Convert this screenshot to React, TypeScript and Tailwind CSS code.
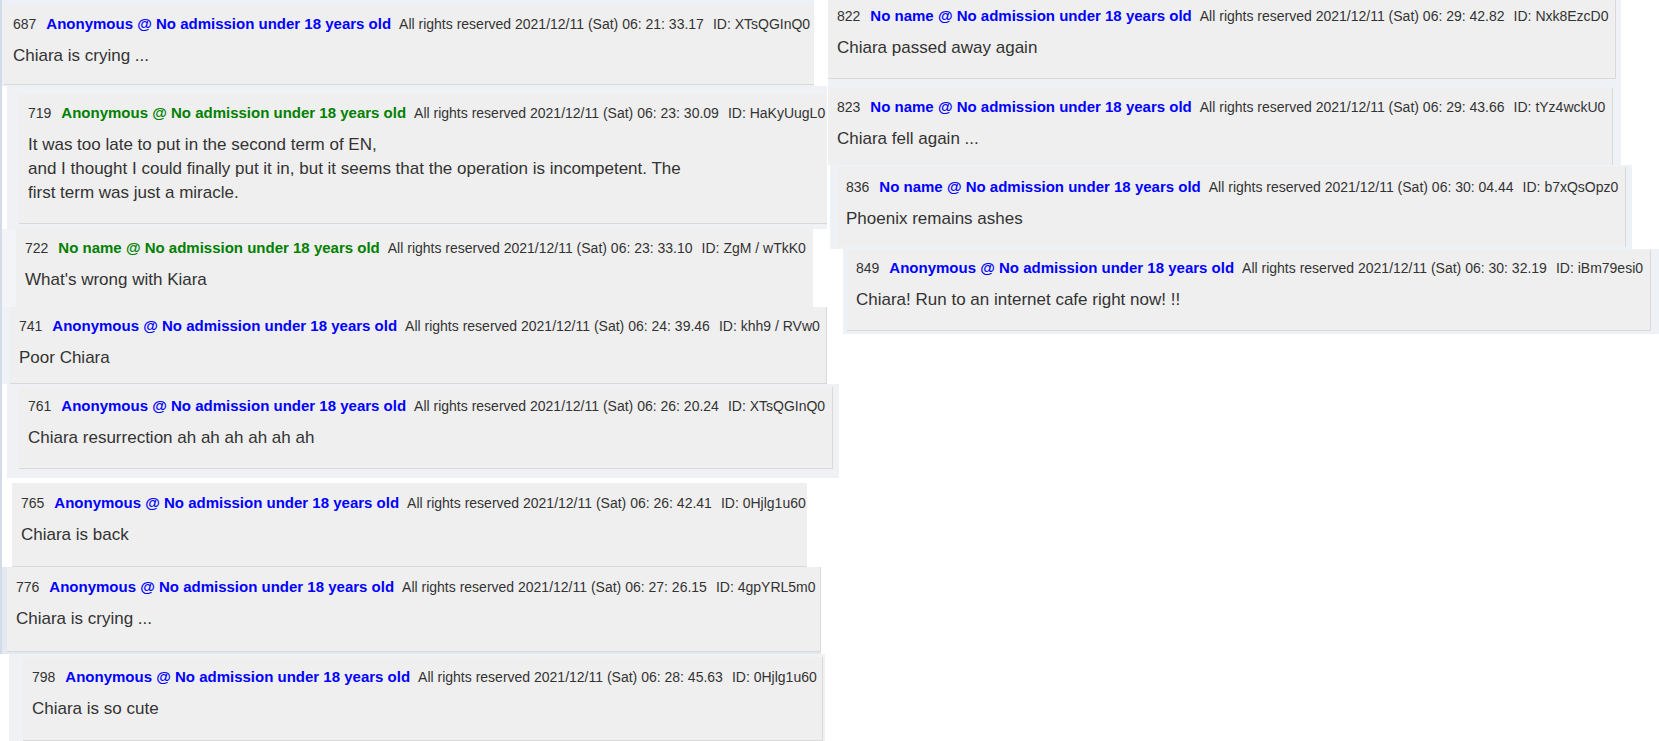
import React from 'react';

type Post = {
  no: number;
  name: string;
  green?: boolean;
  time: string;
  id: string;
  body: string[];
};

function PostCard({ post, className }: { post: Post; className: string }) {
  return (
    <div className={'bg-[#efefef] border-[#d9d9d9] pl-[9px] overflow-hidden ' + className}>
      {/* header line */}
      <div className="flex items-baseline whitespace-nowrap leading-[20px] text-[#333]">
        <span className="text-[14px]">{post.no}</span>
        <span className={'ml-[10px] text-[15px] font-bold ' + (post.green ? 'text-[#008000]' : 'text-[#0000ff]')}>
          {post.name} @ No admission under 18 years old
        </span>
        <span className="ml-[8px] text-[14px]">All rights reserved 2021/12/11 (Sat) {post.time}</span>
        <span className="ml-[9px] text-[14px]">ID: {post.id}</span>
      </div>
      <div className="mt-[10px] text-[17px] leading-[24px] text-[#333]">
        {post.body.map((line, i) => (
          <div key={i} className="whitespace-nowrap">{line}</div>
        ))}
      </div>
    </div>
  );
}

const p = {
  p687: { no: 687, name: 'Anonymous', time: '06: 21: 33.17', id: 'XTsQGInQ0', body: ['Chiara is crying ...'] },
  p719: {
    no: 719,
    name: 'Anonymous',
    green: true,
    time: '06: 23: 30.09',
    id: 'HaKyUugL0',
    body: [
      'It was too late to put in the second term of EN,',
      'and I thought I could finally put it in, but it seems that the operation is incompetent. The',
      'first term was just a miracle.',
    ],
  },
  p722: { no: 722, name: 'No name', green: true, time: '06: 23: 33.10', id: 'ZgM / wTkK0', body: ["What's wrong with Kiara"] },
  p741: { no: 741, name: 'Anonymous', time: '06: 24: 39.46', id: 'khh9 / RVw0', body: ['Poor Chiara'] },
  p761: { no: 761, name: 'Anonymous', time: '06: 26: 20.24', id: 'XTsQGInQ0', body: ['Chiara resurrection ah ah ah ah ah ah'] },
  p765: { no: 765, name: 'Anonymous', time: '06: 26: 42.41', id: '0Hjlg1u60', body: ['Chiara is back'] },
  p776: { no: 776, name: 'Anonymous', time: '06: 27: 26.15', id: '4gpYRL5m0', body: ['Chiara is crying ...'] },
  p798: { no: 798, name: 'Anonymous', time: '06: 28: 45.63', id: '0Hjlg1u60', body: ['Chiara is so cute'] },
  p822: { no: 822, name: 'No name', time: '06: 29: 42.82', id: 'Nxk8EzcD0', body: ['Chiara passed away again'] },
  p823: { no: 823, name: 'No name', time: '06: 29: 43.66', id: 'tYz4wckU0', body: ['Chiara fell again ...'] },
  p836: { no: 836, name: 'No name', time: '06: 30: 04.44', id: 'b7xQsOpz0', body: ['Phoenix remains ashes'] },
  p849: { no: 849, name: 'Anonymous', time: '06: 30: 32.19', id: 'iBm79esi0', body: ['Chiara! Run to an internet cafe right now! !!'] },
};

export default function App() {
  return (
    <div className="w-[1659px] h-[741px] overflow-hidden bg-white flex items-start font-['Liberation_Sans',Arial,sans-serif]">
      {/* left column of clippings */}
      <div className="w-[828px] shrink-0">
        <div className="border-l-2 border-[#d3dbe8]">
          <div className="w-[812px] h-[86px] bg-[#edf0f6] pt-[5px] pl-[2px]">
            <PostCard post={p.p687} className="h-[80px] border-b pt-[9px]" />
          </div>
          <div className="ml-[5px] w-[820px] h-[143px] bg-[#f0f1f5] pt-[8px] pl-[12px]">
            <PostCard post={p.p719} className="h-[130px] border-b pt-[9px]" />
          </div>
          <div className="w-[811px] h-[78px] bg-[#f3f4f8] pl-[14px]">
            <PostCard post={p.p722} className="h-[78px] pt-[9px]" />
          </div>
          <div className="w-[825px] h-[77px] bg-[#eef1f6] pl-[8px]">
            <PostCard post={p.p741} className="h-[77px] border-b border-r pt-[9px]" />
          </div>
          <div className="ml-[5px] w-[832px] h-[94px] bg-[#f0f1f5] pt-[3px] pl-[12px] pr-[6px]">
            <PostCard post={p.p761} className="h-[82px] border-b border-r pt-[9px]" />
          </div>
          <div className="h-[89px] pt-[5px] pl-[10px]">
            <PostCard post={p.p765} className="w-[795px] h-[84px] border-b pt-[10px]" />
          </div>
          <div className="w-[819px] h-[87px] bg-[#e3e8f1] pl-[5px]">
            <PostCard post={p.p776} className="h-[85px] border-b border-r pt-[10px]" />
          </div>
        </div>
        <div className="ml-[9px] w-[816px] h-[87px] bg-[#f0f1f5] pt-[3px] pl-[14px] pr-[2px]">
          <PostCard post={p.p798} className="h-[84px] border-b border-r pt-[10px]" />
        </div>
      </div>

      {/* right column of clippings */}
      <div className="flex-1">
        <div className="w-[793px] h-[80px] bg-[#eef1f6] pr-[5px]">
          <PostCard post={p.p822} className="h-[79px] border-b border-r pt-[6px]" />
        </div>
        <div className="w-[793px] h-[85px] bg-[#eef1f6] pt-[8px] pr-[8px]">
          <PostCard post={p.p823} className="h-[77px] border-r pt-[9px]" />
        </div>
        <div className="ml-[2px] w-[802px] h-[84px] bg-[#eef1f6] pt-[2px] pl-[7px] pr-[6px]">
          <PostCard post={p.p836} className="h-[80px] border-r pt-[10px]" />
        </div>
        <div className="ml-[15px] w-[816px] h-[85px] bg-[#eef1f6] pt-[1px] pl-[4px] pr-[8px]">
          <PostCard post={p.p849} className="h-[81px] border-b border-r pt-[8px]" />
        </div>
      </div>
    </div>
  );
}
